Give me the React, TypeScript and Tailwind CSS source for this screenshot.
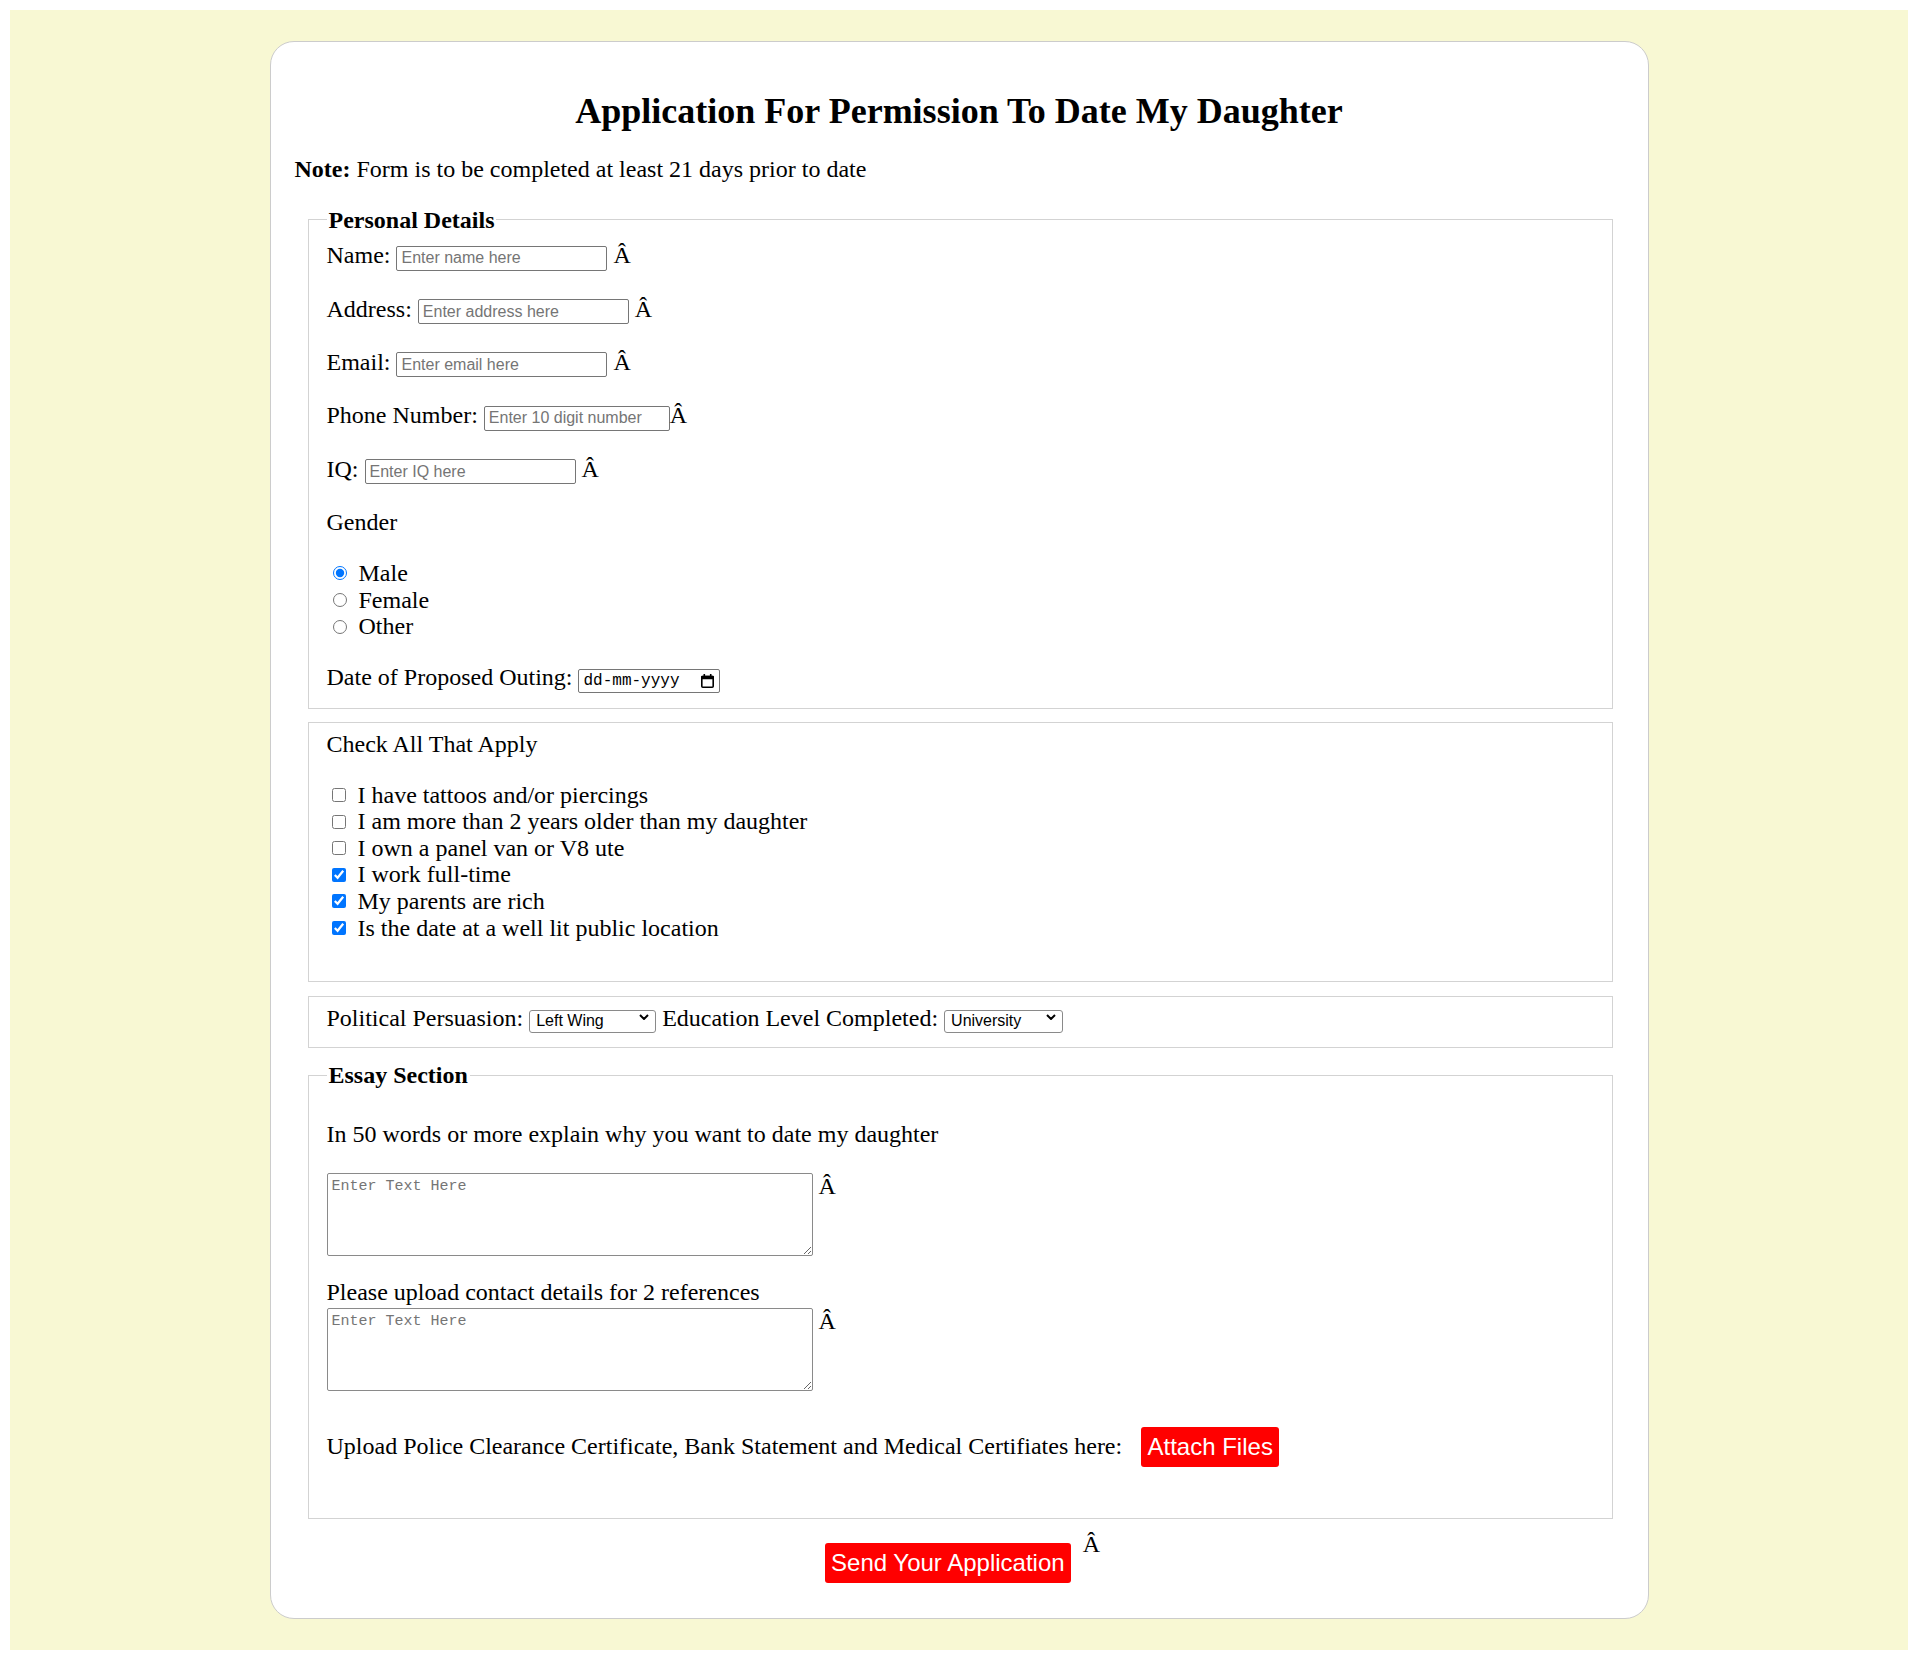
import React from "react";

const serif = "font-['Liberation_Serif','Times_New_Roman',serif]";

function Line({ children, className = "" }: { children: React.ReactNode; className?: string }) {
  return (
    <div className={`h-[26.67px] leading-[26.67px] whitespace-nowrap ${className}`}>
      {children}
    </div>
  );
}

function TextInput({ placeholder, width }: { placeholder: string; width: string }) {
  return (
    <input
      type="text"
      placeholder={placeholder}
      className={`${width} h-[25px] border border-[#767676] rounded-[2px] px-[4px] align-baseline font-['Liberation_Sans',Arial,sans-serif] text-[16px] leading-[18px] placeholder:text-[#757575]`}
    />
  );
}

function Select({ value, width }: { value: string; width: string }) {
  return (
    <span className="relative inline-block align-baseline">
      <select
        defaultValue={value}
        className={`${width} h-[23px] appearance-none border border-[#8a8a8a] rounded-[3px] pl-[6px] pr-[20px] bg-white font-['Liberation_Sans',Arial,sans-serif] text-[16px] leading-[18px]`}
      >
        <option>{value}</option>
      </select>
      <svg
        className="absolute right-[7px] top-[9px] pointer-events-none"
        width="10"
        height="6"
        viewBox="0 0 10 6"
        fill="none"
        stroke="black"
        strokeWidth="2"
      >
        <path d="M1 1l4 4 4-4" />
      </svg>
    </span>
  );
}

function DateBox() {
  return (
    <span className="inline-flex items-center justify-between align-baseline w-[142px] h-[24px] border border-[#767676] rounded-[2px] pl-[4px] pr-[5px] font-['Liberation_Mono',monospace] text-[16px] leading-[18px]">
      <span>dd-mm-yyyy</span>
      <svg width="13" height="14" viewBox="0 0 13 14" fill="black">
        <rect x="2.5" y="0" width="1.6" height="3" />
        <rect x="8.9" y="0" width="1.6" height="3" />
        <rect x="0" y="1.8" width="13" height="3.4" rx="1" />
        <rect x="0.8" y="2.5" width="11.4" height="10.7" rx="1" fill="none" stroke="black" strokeWidth="1.6" />
      </svg>
    </span>
  );
}

function TextArea() {
  return (
    <textarea
      placeholder="Enter Text Here"
      className="w-[486px] h-[83px] border border-[#8a8a8a] rounded-[2px] px-[4px] pt-[4px] font-['Liberation_Mono',monospace] text-[15px] leading-[18px] placeholder:text-[#757575]"
    />
  );
}

const checks = [
  { label: "I have tattoos and/or piercings", on: false },
  { label: "I am more than 2 years older than my daughter", on: false },
  { label: "I own a panel van or V8 ute", on: false },
  { label: "I work full-time", on: true },
  { label: "My parents are rich", on: true },
  { label: "Is the date at a well lit public location", on: true },
];

export default function App() {
  return (
    <div className={`min-h-[1662px] bg-white pt-[10px] pl-[10px] text-black text-[24px] ${serif}`}>
      <div className="w-[1898px] bg-[#f8f8d3] pt-[31px] pb-[31px]">
        <div className="mx-auto w-[1379px] bg-white border border-[#cccccc] rounded-[24px] px-[24px] pt-[49px] pb-[35px]">
          <h2 className="text-[36px] font-bold leading-[41px] text-center">
            Application For Permission To Date My Daughter
          </h2>
          <Line className="mt-[24px]">
            <b>Note:</b> Form is to be completed at least 21 days prior to date
          </Line>

          <fieldset className="mt-[24px] ml-[13px] w-[1305px] border border-[#d3d3d3] px-[18px] pt-[9px] pb-[17px]">
            <legend className="px-[2px] font-bold leading-[26.67px]">Personal Details</legend>
            <Line>
              Name: <TextInput placeholder="Enter name here" width="w-[211px]" /> Â
            </Line>
            <Line className="mt-[26.67px]">
              Address: <TextInput placeholder="Enter address here" width="w-[211px]" /> Â
            </Line>
            <Line className="mt-[26.67px]">
              Email: <TextInput placeholder="Enter email here" width="w-[211px]" /> Â
            </Line>
            <Line className="mt-[26.67px]">
              Phone Number: <TextInput placeholder="Enter 10 digit number" width="w-[186px]" />Â
            </Line>
            <Line className="mt-[26.67px]">
              IQ: <TextInput placeholder="Enter IQ here" width="w-[211px]" /> Â
            </Line>
            <Line className="mt-[26.67px]">Gender</Line>
            <div className="mt-[24.4px]">
              {["Male", "Female", "Other"].map((g) => (
                <div key={g} className="flex items-center h-[26.67px] leading-[26.67px]">
                  <input
                    type="radio"
                    name="gender"
                    defaultChecked={g === "Male"}
                    className="w-[14px] h-[14px] ml-[6px] mr-[12px] accent-[#0075ff]"
                  />
                  <span>{g}</span>
                </div>
              ))}
            </div>
            <Line className="mt-[24.3px]">
              Date of Proposed Outing: <DateBox />
            </Line>
          </fieldset>

          <fieldset className="mt-[13px] ml-[13px] w-[1305px] border border-[#d3d3d3] px-[18px] pt-[8px] pb-[40px]">
            <Line>Check All That Apply</Line>
            <div className="mt-[24px]">
              {checks.map((c) => (
                <div key={c.label} className="flex items-center h-[26.67px] leading-[26.67px] whitespace-nowrap">
                  <input
                    type="checkbox"
                    defaultChecked={c.on}
                    className="w-[14px] h-[14px] ml-[5px] mr-[12px] accent-[#0075ff]"
                  />
                  <span>{c.label}</span>
                </div>
              ))}
            </div>
          </fieldset>

          <fieldset className="mt-[14px] ml-[13px] w-[1305px] border border-[#d3d3d3] px-[18px] pt-[8px] pb-[15px]">
            <Line>
              Political Persuasion: <Select value="Left Wing" width="w-[127px]" /> Education Level
              Completed: <Select value="University" width="w-[119px]" />
            </Line>
          </fieldset>

          <fieldset className="mt-[14px] ml-[13px] w-[1305px] border border-[#d3d3d3] px-[18px] pt-[9px] pb-[58px]">
            <legend className="px-[2px] font-bold leading-[26.67px]">Essay Section</legend>
            <Line className="mt-[23px]">In 50 words or more explain why you want to date my daughter</Line>
            <div className="mt-[25.7px] flex items-start">
              <TextArea />
              <span className="ml-[6px] leading-[26.67px]">Â</span>
            </div>
            <Line className="mt-[23px]">Please upload contact details for 2 references</Line>
            <div className="mt-[2px] flex items-start">
              <TextArea />
              <span className="ml-[6px] leading-[26.67px]">Â</span>
            </div>
            <div className="mt-[42.5px] flex items-center h-[26.67px] leading-[26.67px] whitespace-nowrap">
              <span>Upload Police Clearance Certificate, Bank Statement and Medical Certifiates here:</span>
              <button className="ml-[19px] w-[138px] h-[40px] shrink-0 bg-[#ff0000] text-white rounded-[3px] font-['Liberation_Sans',Arial,sans-serif] text-[24px] leading-[28px]">
                Attach Files
              </button>
            </div>
          </fieldset>

          <div className="mt-[12px] flex justify-center items-start pl-[7px]">
            <button className="mt-[12px] w-[246px] h-[40px] bg-[#ff0000] text-white rounded-[3px] font-['Liberation_Sans',Arial,sans-serif] text-[24px] leading-[28px] whitespace-nowrap">
              Send Your Application
            </button>
            <span className="ml-[12px] leading-[26.67px]">Â</span>
          </div>
        </div>
      </div>
    </div>
  );
}
